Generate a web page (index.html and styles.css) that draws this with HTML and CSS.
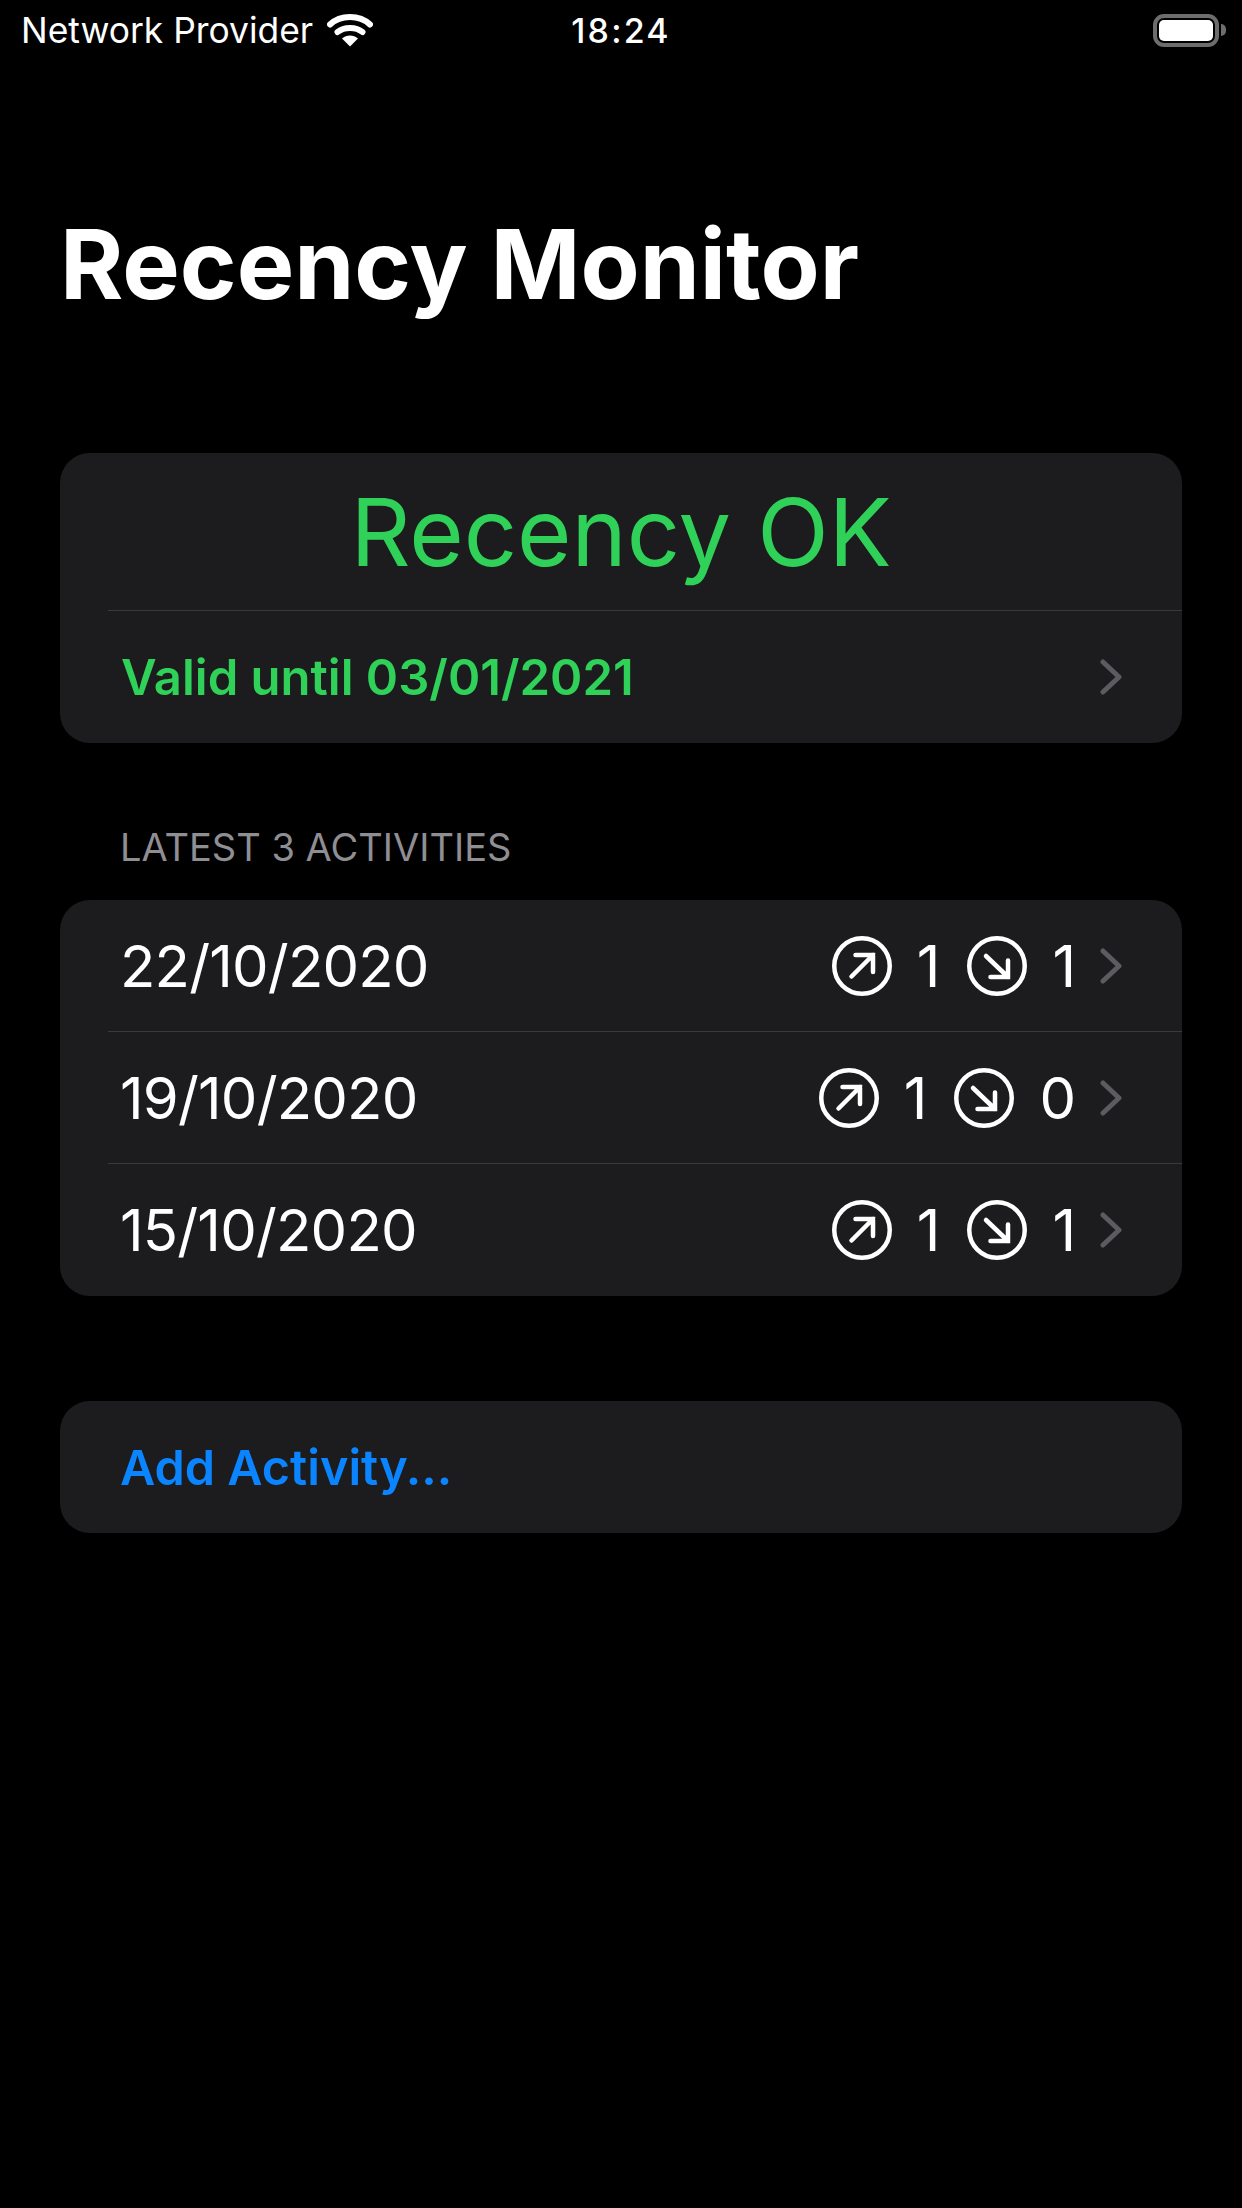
FILE: index.html

```html
<!DOCTYPE html>
<html lang="en">
<head>
  <meta charset="UTF-8" />
  <meta name="viewport" content="width=device-width, initial-scale=1.0"/>
  <title>Recency Monitor</title>
  <link rel="stylesheet" href="styles.css">
</head>
<body>
  <div class="status-bar">
    <div class="status-left">
      <span class="carrier">Network Provider</span>
      <svg class="wifi" width="46" height="34" viewBox="0 0 46 34">
        <path d="M3 11.500C13.500 1.500 32.500 1.500 43 11.500" fill="none" stroke="#fff" stroke-width="6" stroke-linecap="round"/>
        <path d="M10.500 19C17 13.500 29 13.500 35.500 19" fill="none" stroke="#fff" stroke-width="6" stroke-linecap="round"/>
        <path d="M23 33.500L15 25.500C19.500 21.500 26.500 21.500 31 25.500Z" fill="#fff"/>
      </svg>
    </div>
    <span class="clock">18:24</span>
    <div class="battery">
      <div class="battery-body"><div class="battery-fill"></div></div>
      <div class="battery-cap"></div>
    </div>
  </div>

  <h1>Recency Monitor</h1>

  <div class="card">
    <div class="row row-status"><span class="status-text">Recency OK</span></div>
    <div class="row row-tall">
      <span class="valid">Valid until 03/01/2021</span>
      <svg class="chevron" width="22" height="36" viewBox="0 0 22 36"><path d="M3 3L19 18L3 33" fill="none" stroke="#5b5b60" stroke-width="5" stroke-linecap="round" stroke-linejoin="round"/></svg>
    </div>
  </div>

  <div class="section-label">LATEST 3 ACTIVITIES</div>

  <div class="card">
    <div class="row row-short">
      <span class="date">22/10/2020</span>
      <div class="counts">
        <svg class="arrow" width="60" height="60" viewBox="0 0 60 60"><circle cx="30" cy="30" r="27.750" fill="none" stroke="#fff" stroke-width="4.500"/><path d="M19.500 40.500L41 19M23.500 19H41V36" fill="none" stroke="#fff" stroke-width="4.500" stroke-linecap="round"/></svg>
        <span class="num">1</span>
        <svg class="arrow" width="60" height="60" viewBox="0 0 60 60"><circle cx="30" cy="30" r="27.750" fill="none" stroke="#fff" stroke-width="4.500"/><path d="M19 20L41 41M23.500 41H41V24.500" fill="none" stroke="#fff" stroke-width="4.500" stroke-linecap="round"/></svg>
        <span class="num">1</span>
      </div>
      <svg class="chevron" width="22" height="36" viewBox="0 0 22 36"><path d="M3 3L19 18L3 33" fill="none" stroke="#5b5b60" stroke-width="5" stroke-linecap="round" stroke-linejoin="round"/></svg>
    </div>
    <div class="row">
      <span class="date">19/10/2020</span>
      <div class="counts">
        <svg class="arrow" width="60" height="60" viewBox="0 0 60 60"><circle cx="30" cy="30" r="27.750" fill="none" stroke="#fff" stroke-width="4.500"/><path d="M19.500 40.500L41 19M23.500 19H41V36" fill="none" stroke="#fff" stroke-width="4.500" stroke-linecap="round"/></svg>
        <span class="num">1</span>
        <svg class="arrow" width="60" height="60" viewBox="0 0 60 60"><circle cx="30" cy="30" r="27.750" fill="none" stroke="#fff" stroke-width="4.500"/><path d="M19 20L41 41M23.500 41H41V24.500" fill="none" stroke="#fff" stroke-width="4.500" stroke-linecap="round"/></svg>
        <span class="num">0</span>
      </div>
      <svg class="chevron" width="22" height="36" viewBox="0 0 22 36"><path d="M3 3L19 18L3 33" fill="none" stroke="#5b5b60" stroke-width="5" stroke-linecap="round" stroke-linejoin="round"/></svg>
    </div>
    <div class="row row-tall">
      <span class="date">15/10/2020</span>
      <div class="counts">
        <svg class="arrow" width="60" height="60" viewBox="0 0 60 60"><circle cx="30" cy="30" r="27.750" fill="none" stroke="#fff" stroke-width="4.500"/><path d="M19.500 40.500L41 19M23.500 19H41V36" fill="none" stroke="#fff" stroke-width="4.500" stroke-linecap="round"/></svg>
        <span class="num">1</span>
        <svg class="arrow" width="60" height="60" viewBox="0 0 60 60"><circle cx="30" cy="30" r="27.750" fill="none" stroke="#fff" stroke-width="4.500"/><path d="M19 20L41 41M23.500 41H41V24.500" fill="none" stroke="#fff" stroke-width="4.500" stroke-linecap="round"/></svg>
        <span class="num">1</span>
      </div>
      <svg class="chevron" width="22" height="36" viewBox="0 0 22 36"><path d="M3 3L19 18L3 33" fill="none" stroke="#5b5b60" stroke-width="5" stroke-linecap="round" stroke-linejoin="round"/></svg>
    </div>
  </div>

  <div class="card card-action">
    <div class="row"><span class="add">Add Activity...</span></div>
  </div>
</body>
</html>
```

FILE: styles.css

```css
body {
  margin: 0;
  height: 2208px;
  overflow: hidden;
  background-color: #000;
  color: #fff;
  font-family: Inter, "Noto Sans", sans-serif;
}
.status-bar {
  display: grid;
  grid-template-columns: 1fr auto 1fr;
  align-items: center;
  height: 60px;
  padding: 0 16px 0 16px;
}
.status-left {
  display: flex;
  align-items: center;
  gap: 14px;
  padding-left: 5px;
}
.carrier {
  font-size: 35.400px;
}
.clock {
  font-size: 34px;
  font-weight: 500;
  letter-spacing: 2.200px;
}
.battery {
  display: flex;
  align-items: center;
  justify-content: flex-end;
  gap: 2px;
}
.battery-body {
  width: 66px;
  height: 33px;
  box-sizing: border-box;
  padding: 2px;
  border: 4px solid #6d6d6d;
  border-radius: 11px;
}
.battery-fill {
  height: 100%;
  background-color: #fff;
  border-radius: 5px;
}
.battery-cap {
  width: 5px;
  height: 12px;
  background-color: #6d6d6d;
  border-radius: 0 6px 6px 0;
}
h1 {
  margin: 0;
  padding: 148px 0 0 60px;
  height: 393px;
  box-sizing: border-box;
  font-size: 96.600px;
  line-height: 112px;
  font-weight: 700;
}
.card {
  margin: 0 60px;
  background-color: #1c1c1e;
  border-radius: 30px;
  overflow: hidden;
}
.row {
  display: flex;
  align-items: center;
  height: 132px;
  margin-left: 48px;
  padding-right: 60px;
  border-top: 1px solid #3a3a3c;
  box-sizing: border-box;
}
.row:first-child {
  border-top: none;
}
.row-status {
  justify-content: center;
  height: 157px;
  margin-left: 0;
  padding-right: 0;
}
.row-tall {
  height: 133px;
}
.row-short {
  height: 131px;
}
.status-text {
  font-size: 93.500px;
  color: #30d158;
}
.valid {
  flex: 1;
  margin-left: 13px;
  font-size: 49px;
  font-weight: 600;
  color: #30d158;
}
.date {
  flex: 1;
  margin-left: 12px;
  font-size: 58px;
  letter-spacing: -0.800px;
}
.counts {
  display: flex;
  align-items: center;
}
.num {
  margin: 0 24px 0 25px;
  font-size: 58px;
}
.num:nth-child(2) {
  margin-right: 27px;
}
.chevron {
  flex-shrink: 0;
}
.section-label {
  padding: 80px 0 0 120px;
  height: 157px;
  box-sizing: border-box;
  font-size: 38px;
  line-height: 48px;
  color: #8e8e93;
}
.card-action {
  margin-top: 105px;
}
.add {
  margin-left: 12px;
  font-size: 48.500px;
  font-weight: 600;
  color: #0a84ff;
}
```
